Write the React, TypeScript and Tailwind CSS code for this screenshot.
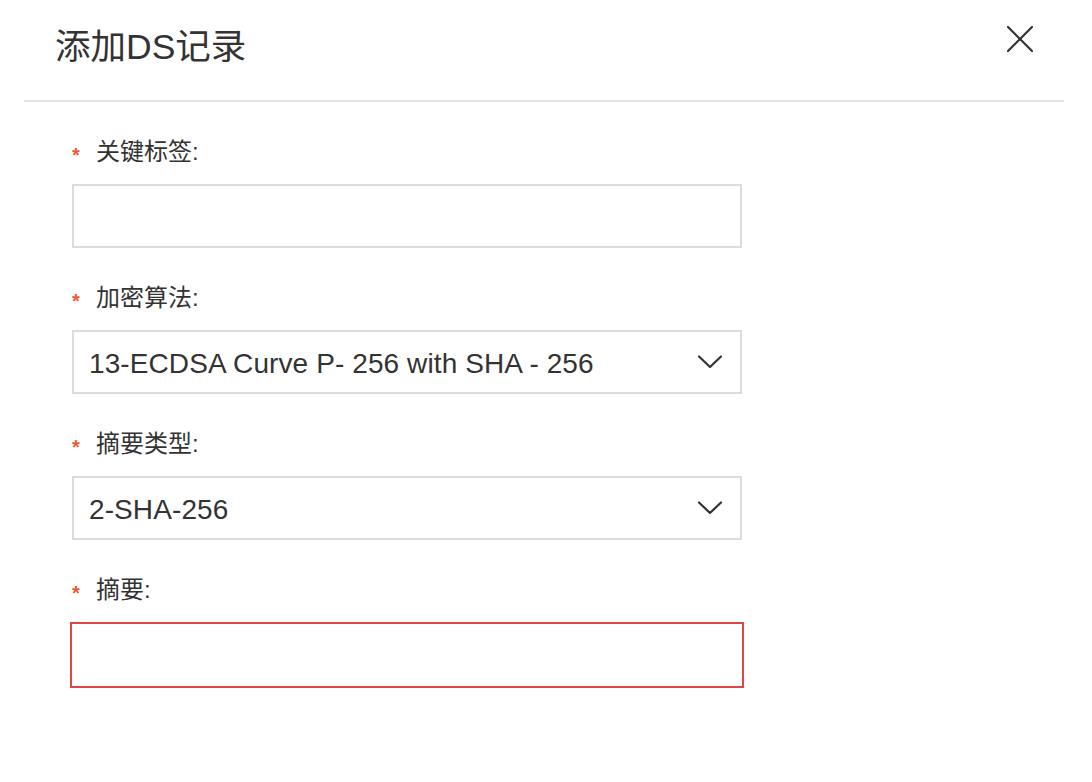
import React from "react";

const FONT = { fontFamily: '"Liberation Sans", "Noto Sans CJK SC", sans-serif' };

function Label({ text }: { text: string }) {
  return (
    <div className="flex h-[32px] items-center">
      <span className="w-[8px] mr-[16px] text-[20px] font-bold leading-none text-[#ee5a30] translate-y-[3px]">*</span>
      <span className="text-[24px] leading-none text-[#333333]">{text}</span>
    </div>
  );
}

function Chevron() {
  return (
    <svg width="24" height="14" viewBox="0 0 24 14" fill="none">
      <polyline points="1,1.5 12,12 23,1.5" stroke="#333333" strokeWidth="2.2" strokeLinecap="round" strokeLinejoin="round" />
    </svg>
  );
}

function SelectBox({ value }: { value: string }) {
  return (
    <div className="mt-[16px] flex h-[64px] w-[670px] items-center justify-between border-2 border-[#dcdcdc] bg-white pl-[15px] pr-[18px]">
      <span className="pt-[3px] text-[28px] tracking-[0.1px] leading-none text-[#333333]">{value}</span>
      <Chevron />
    </div>
  );
}

export default function App() {
  return (
    <div className="h-[782px] w-[1092px] bg-white" style={FONT}>
      <div className="ml-[24px] mr-[28px] flex h-[102px] justify-between border-b-2 border-[#e3e3e3]">
        <h1 className="pl-[31px] pt-[30px] text-[35.5px] font-normal leading-none text-[#333333]">添加DS记录</h1>
        <button className="mr-[31px] mt-[26px] h-[26px] w-[26px]" aria-label="close">
          <svg width="26" height="26" viewBox="0 0 26 26" fill="none">
            <line x1="1" y1="1" x2="25" y2="25" stroke="#333333" strokeWidth="2.2" strokeLinecap="round" />
            <line x1="25" y1="1" x2="1" y2="25" stroke="#333333" strokeWidth="2.2" strokeLinecap="round" />
          </svg>
        </button>
      </div>

      <div className="flex flex-col pl-[72px] pt-[34px]">
        <Label text="关键标签:" />
        <div className="mt-[16px] h-[64px] w-[670px] border-2 border-[#dcdcdc] bg-white" />

        <div className="mt-[34px]">
          <Label text="加密算法:" />
        </div>
        <SelectBox value="13-ECDSA Curve P- 256 with SHA - 256" />

        <div className="mt-[34px]">
          <Label text="摘要类型:" />
        </div>
        <SelectBox value="2-SHA-256" />

        <div className="mt-[34px]">
          <Label text="摘要:" />
        </div>
        <div className="ml-[-2px] mt-[16px] h-[66px] w-[674px] border-2 border-[#e04646] bg-white" />
      </div>
    </div>
  );
}
